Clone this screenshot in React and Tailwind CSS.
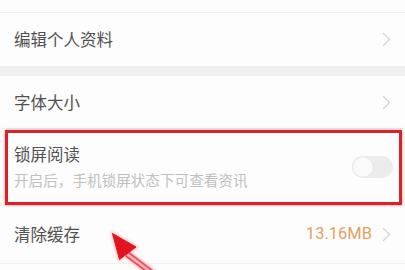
import React from "react";

const Chevron = () => (
  <svg width="9" height="15" viewBox="0 0 9 15" fill="none" className="shrink-0">
    <path d="M1.5 1.5 L7.5 7.5 L1.5 13.5" stroke="#d2d2d2" strokeWidth="1.2" strokeLinecap="round" strokeLinejoin="round" />
  </svg>
);

export default function App() {
  return (
    <div
      className="relative w-[405px] h-[270px] overflow-hidden bg-[#fdfdfd] text-[#515151]"
      style={{ fontFamily: '"Noto Sans CJK SC", "Noto Sans", sans-serif' }}
    >
      <div className="h-[13px] border-b border-[#f0f0f0]" />
      <div className="flex items-center justify-between h-[53px] pl-[14px] pr-[14px]">
        <span className="text-[16.5px] leading-none">编辑个人资料</span>
        <Chevron />
      </div>
      <div className="h-[10px] bg-[#f0f0f0]" />
      <div className="flex items-center justify-between h-[53px] pl-[14px] pr-[14px] border-b border-[#f0f0f0]">
        <span className="text-[16.5px] leading-none">字体大小</span>
        <Chevron />
      </div>
      <div className="flex items-center justify-between h-[77px] pl-[14px] pr-[12px] border-b border-[#f0f0f0]">
        <div className="flex flex-col gap-[10px]">
          <span className="text-[16.5px] leading-none">锁屏阅读</span>
          <span className="text-[14.6px] leading-none text-[#c0c0c0]">开启后，手机锁屏状态下可查看资讯</span>
        </div>
        <div className="w-[41px] h-[22px] rounded-full bg-[#ececec] p-[1px] flex items-center">
          <div className="w-[20px] h-[20px] rounded-full bg-[#fafafa] shadow-[0_0_1px_rgba(0,0,0,0.12)]" />
        </div>
      </div>
      <div className="flex items-center justify-between h-[58px] pl-[14px] pr-[14px] border-b border-[#f0f0f0]">
        <span className="text-[16.5px] leading-none">清除缓存</span>
        <div className="flex items-center gap-[10px]">
          <span className="text-[16.5px] leading-none text-[#e3a262]" style={{ fontFamily: '"Roboto", sans-serif' }}>13.16MB</span>
          <Chevron />
        </div>
      </div>

      {/* annotation box */}
      <div className="absolute left-[5px] top-[130px] w-[397px] h-[75px] border-[3px] border-[#d8222a] shadow-[0_0_3px_rgba(216,34,42,0.5)]" />

      {/* annotation arrow */}
      <svg className="absolute left-[100px] top-[222px]" width="70" height="48" viewBox="0 0 70 48">
        <defs>
          <filter id="glow" x="-30%" y="-30%" width="160%" height="160%">
            <feGaussianBlur stdDeviation="1.3" />
          </filter>
        </defs>
        <g filter="url(#glow)">
          <path d="M12 11 L37 25 L19 38 Z" fill="#ffd0d0" stroke="#ffd6d6" strokeWidth="4" strokeLinejoin="round" />
          <path d="M27 32 L56 54" stroke="#ffc4c4" strokeWidth="9" />
        </g>
        <path d="M27 32 L56 54" stroke="#e8505a" strokeWidth="6" />
        <path d="M27 32 L56 54" stroke="#f7b3b8" strokeWidth="2.5" />
        <path d="M12.5 11.5 L36 25 L19.5 37.5 Z" fill="#e3141e" stroke="#e3141e" strokeWidth="1" strokeLinejoin="round" />
      </svg>
    </div>
  );
}
